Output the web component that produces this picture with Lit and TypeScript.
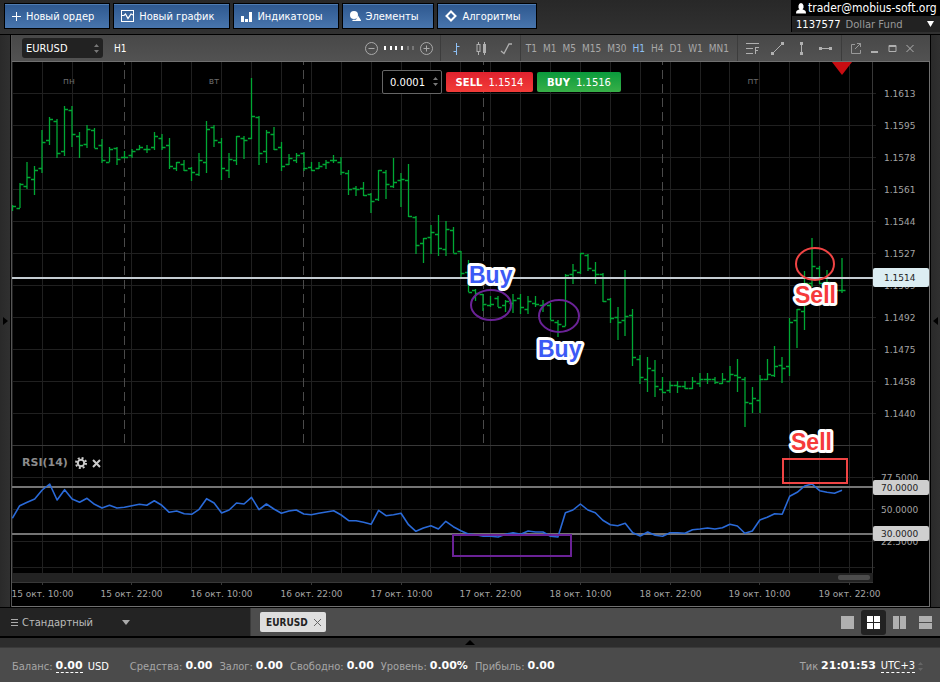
import { LitElement, html, svg, css } from "lit";
import { customElement, state } from "lit/decorators.js";
import { classMap } from "lit/directives/class-map.js";

type Bar = [high: number, low: number, open: number, close: number];

// Depth below the chart top, three ticks to a pixel: high, low, open, close.
const firstHalf: Bar[] = [
  [435, 452, 439, 439], [370, 445, 445, 372], [306, 388, 377, 352], [318, 406, 358, 330],
  [210, 338, 324, 245], [171, 254, 240, 178], [178, 293, 184, 280], [138, 289, 274, 146],
  [138, 260, 150, 223], [217, 293, 229, 256], [194, 265, 251, 206], [205, 265, 211, 263],
  [238, 310, 256, 301], [262, 307, 307, 267], [262, 316, 263, 296], [273, 291, 290, 290],
  [268, 293, 285, 273], [255, 271, 267, 262], [255, 278, 267, 268], [216, 271, 262, 229],
  [222, 271, 235, 262], [234, 328, 256, 319], [307, 332, 324, 307], [300, 332, 313, 330],
  [322, 362, 324, 335], [279, 349, 341, 301], [184, 338, 307, 206], [195, 260, 200, 240],
  [234, 361, 245, 324], [279, 355, 330, 296], [228, 316, 301, 229], [229, 298, 235, 240],
  [54, 238, 235, 167], [167, 316, 172, 280], [211, 310, 274, 217], [200, 271, 223, 268],
  [245, 332, 262, 319], [283, 316, 313, 295], [279, 310, 301, 284], [277, 332, 279, 325],
  [306, 332, 320, 330], [307, 328, 324, 319], [301, 327, 313, 307], [284, 310, 301, 301],
  [290, 344, 307, 335], [329, 406, 340, 388], [377, 408, 383, 388], [365, 408, 383, 406],
  [399, 460, 401, 422], [329, 422, 416, 330], [329, 416, 335, 371], [295, 383, 377, 367],
  [340, 440, 361, 358], [312, 472, 361, 467], [467, 583, 472, 556], [534, 610, 550, 535],
  [494, 583, 530, 517], [466, 588, 523, 563], [484, 588, 568, 506], [500, 580, 511, 580],
];

// Same units, measured from a level 480 ticks lower.
const secondHalf: Bar[] = [
  [94, 172, 94, 160], [121, 217, 155, 217], [206, 242, 211, 218], [223, 274, 223, 251],
  [227, 260, 256, 251], [227, 262, 234, 262], [239, 276, 256, 243], [222, 280, 248, 239],
  [222, 281, 235, 262], [228, 282, 268, 243], [228, 260, 250, 251], [239, 276, 256, 251],
  [250, 301, 256, 301], [301, 350, 307, 313], [161, 319, 319, 166], [132, 192, 161, 150],
  [98, 163, 156, 100], [103, 152, 106, 145], [126, 192, 151, 163], [160, 247, 161, 244],
  [233, 310, 238, 295], [262, 360, 290, 307], [149, 349, 301, 289], [267, 439, 284, 410],
  [404, 493, 416, 472], [410, 515, 478, 445], [421, 532, 451, 499], [472, 520, 506, 517],
  [484, 520, 511, 495], [484, 520, 495, 498], [484, 507, 499, 505], [472, 508, 505, 484],
  [460, 502, 489, 478], [460, 492, 478, 476], [472, 492, 478, 486], [460, 492, 490, 478],
  [438, 484, 484, 461], [416, 515, 466, 472], [472, 622, 478, 545], [500, 578, 550, 535],
  [466, 578, 540, 478], [416, 481, 478, 461], [377, 470, 466, 439], [410, 488, 434, 445],
  [294, 467, 439, 307], [267, 384, 301, 268], [154, 330, 273, 190], [54, 200, 190, 139],
  [139, 192, 145, 190], [149, 190, 185, 185], [185, 222, 190, 210], [115, 220, 210, 210],
];

const bars: Bar[] = [
  ...firstHalf,
  ...secondHalf.map((b) => b.map((v) => v + 480) as Bar),
];

// RSI depth below the start of its pane, three ticks to a pixel.
const rsi = [
  265, 227, 217, 207, 180, 162, 210, 179, 207, 217, 205, 223, 234, 226, 234, 232, 227, 223, 226,
  212, 226, 247, 243, 251, 253, 238, 206, 219, 249, 240, 219, 222, 202, 239, 222, 237, 250, 243,
  240, 252, 254, 250, 246, 242, 255, 272, 272, 277, 283, 241, 257, 254, 250, 284, 304, 294, 287,
  297, 274, 290, 302, 312, 314, 319, 319, 321, 313, 308, 313, 303, 306, 306, 319, 321, 248, 240,
  222, 240, 248, 271, 284, 287, 280, 308, 318, 306, 316, 319, 308, 308, 310, 299, 297, 294, 297,
  293, 283, 288, 310, 303, 270, 262, 251, 253, 199, 187, 168, 162, 182, 187, 190, 181,
];

const STEP = 7.475;
const WIDE = 4000;
const priceY = (v: number) => v / 3 - 2;
const rsiY = (v: number) => v / 3 + 368;
// The price scale is at x = 0; history runs to the left of it.
const barX = (i: number) => -31 - STEP * (bars.length - 1 - i);

const prices = ["1.1613", "1.1595", "1.1578", "1.1561", "1.1544", "1.1527", "1.1509", "1.1492", "1.1475", "1.1458", "1.1440"];
const dates = ["15 окт. 10:00", "15 окт. 22:00", "16 окт. 10:00", "16 окт. 22:00", "17 окт. 10:00", "17 окт. 22:00", "18 окт. 10:00", "18 окт. 22:00", "19 окт. 10:00", "19 окт. 22:00"];
const frames = ["T1", "M1", "M5", "M15", "M30", "H1", "H4", "D1", "W1", "MN1"];

const icons = {
  plus: svg`<path d="M4.500 0V9M0 4.500H9" stroke="#fff" fill="none"/>`,
  graph: svg`<rect x=".5" y=".5" width="12" height="11" fill="none" stroke="#fff"/><path d="M1 5.500H3L4.500 4L7 8.500L10 4L12 5" fill="none" stroke="#fff" stroke-width="1.200"/>`,
  columns: svg`<path d="M0 5h3v6H0zM4 8h3v3H4zM8 1h3v10H8z" fill="#fff"/>`,
  shapes: svg`<circle cx="4" cy="4" r="4" fill="#fff"/><path d="M8 4.500L11.500 10H2L3 8.800H6Z" fill="#fff"/>`,
  diamond: svg`<path d="M6 1.500L10.500 6L6 10.500L1.500 6Z" fill="none" stroke="#fff" stroke-width="2"/>`,
};

const actions = [
  { label: "Новый ордер", icon: icons.plus, w: 9, h: 9 },
  { label: "Новый график", icon: icons.graph, w: 13, h: 12 },
  { label: "Индикаторы", icon: icons.columns, w: 11, h: 11 },
  { label: "Элементы", icon: icons.shapes, w: 11, h: 10 },
  { label: "Алгоритмы", icon: icons.diamond, w: 12, h: 12 },
];

const updown = svg`<path d="M0 3L2.500 0L5 3ZM0 6L2.500 9L5 6Z" fill="#777"/>`;

const fonts = css`
  :host {
    font-family: "DejaVu Sans Condensed", "Noto Sans", sans-serif;
    font-size: 11px;
  }
  * {
    box-sizing: border-box;
  }
  button,
  select,
  input {
    margin: 0;
    padding: 0;
    border: 0;
    background: none;
    color: inherit;
    font: inherit;
    appearance: none;
    cursor: pointer;
  }
  svg {
    display: block;
    flex: none;
  }
`;

@customElement("top-bar")
class TopBar extends LitElement {
  static styles = [
    fonts,
    css`
      :host {
        display: flex;
        justify-content: space-between;
        align-items: flex-start;
        height: 35px;
        background: linear-gradient(#282828, #313131);
        border-bottom: 1px solid #000;
      }
      .actions {
        display: flex;
        gap: 3px;
        padding: 3px 0 0 4px;
      }
      .action {
        display: flex;
        align-items: center;
        gap: 5px;
        height: 26px;
        padding: 0 15px 0 7px;
        border: 1px solid #000;
        background: linear-gradient(#2e588f, #4875ad);
        box-shadow: inset 0 1px #4f7cb2;
        color: #fff;
        white-space: nowrap;
      }
      .account {
        width: 149px;
        border-left: 1px solid #000;
        background: #222;
      }
      .mail,
      .number {
        display: flex;
        align-items: center;
        gap: 2px;
        height: 16px;
        padding: 0 6px 0 4px;
        white-space: nowrap;
      }
      .mail {
        background: #000;
        color: #fff;
        font-size: 12px;
      }
      .number {
        gap: 5px;
        width: 100%;
        color: #fff;
        font-family: "DejaVu Sans", sans-serif;
        font-size: 10px;
      }
      .fund {
        flex: 1;
        text-align: left;
        color: #999;
      }
    `,
  ];

  render() {
    return html`
      <nav class="actions">
        ${actions.map(
          (a) => html`<button class="action">
            <svg width=${a.w} height=${a.h} aria-hidden="true">${a.icon}</svg>${a.label}
          </button>`,
        )}
      </nav>
      <div class="account">
        <div class="mail">
          <svg width="10" height="11" aria-hidden="true">
            <path d="M5 0a3 3.500 0 0 1 1.500 6.200L9 7.500Q10 8 10 10.500H0Q0 8 1 7.500L3.500 6.200A3 3.500 0 0 1 5 0z" fill="#fff" />
          </svg>
          trader@mobius-soft.org
        </div>
        <button class="number">
          <span>1137577</span><span class="fund">Dollar Fund</span>
          <svg width="7" height="6" aria-hidden="true"><path d="M0 0H7L3.500 6Z" fill="#fff" /></svg>
        </button>
      </div>
    `;
  }
}

@customElement("chart-toolbar")
class ChartToolbar extends LitElement {
  @state() private frame = "H1";

  static styles = [
    fonts,
    css`
      :host {
        display: flex;
        align-items: center;
        height: 26px;
        padding-left: 10px;
        background: linear-gradient(#484848, #525252);
        color: #a8a8a8;
      }
      .symbol {
        position: relative;
        width: 81px;
        height: 20px;
      }
      .pick {
        width: 100%;
        height: 20px;
        padding: 0 4px;
        border-radius: 3px;
        background: #222;
        color: #fff;
      }
      .updown {
        position: absolute;
        right: 4px;
        top: 6px;
        pointer-events: none;
      }
      .period {
        flex: 1;
        padding-left: 11px;
        color: #fff;
        font-size: 10px;
      }
      .group {
        display: flex;
        align-items: center;
        height: 26px;
        border-right: 1px solid #3c3c3c;
      }
      .zoom {
        gap: 5px;
        padding-right: 7px;
      }
      .kinds {
        gap: 12px;
        padding: 0 7px 0 9px;
      }
      .frames {
        gap: 6px;
        padding: 0 8px 0 5px;
        font-size: 10px;
      }
      .frame.on {
        color: #8ec0f5;
      }
      .tools {
        gap: 11px;
        padding: 0 9px 0 8px;
      }
      .window {
        gap: 9px;
        padding: 0 16px 0 9px;
        border: 0;
      }
    `,
  ];

  render() {
    return html`
      <div class="symbol">
        <select class="pick" aria-label="Инструмент">
          <option>EURUSD</option>
        </select>
        <svg class="updown" width="5" height="9" aria-hidden="true">${updown}</svg>
      </div>
      <span class="period">H1</span>
      <div class="group zoom">
        <button aria-label="Уменьшить">
          <svg width="13" height="13"><circle cx="6.500" cy="6.500" r="6" fill="none" stroke="#aaa" /><path d="M3.500 6.500H9.500" stroke="#aaa" /></svg>
        </button>
        <svg width="32" height="4" aria-hidden="true">
          <path d="M1 0h2v4h-2zM7 0h2v4h-2zM12 0h2v4h-2zM18 0h2v4h-2z" fill="#fff" />
          <path d="M24 0h2v4h-2zM29 0h2v4h-2z" fill="#777" />
        </svg>
        <button aria-label="Увеличить">
          <svg width="13" height="13"><circle cx="6.500" cy="6.500" r="6" fill="none" stroke="#aaa" /><path d="M3.500 6.500H9.500M6.500 3.500V9.500" stroke="#aaa" /></svg>
        </button>
      </div>
      <div class="group kinds">
        <button aria-label="Бары">
          <svg width="13" height="13"><path d="M6.500 1V13M6.500 4.500H9.500M3.500 9.500H6.500" stroke="#8ec0f5" /></svg>
        </button>
        <button aria-label="Свечи">
          <svg width="13" height="13"><path d="M3.500 0V2M3.500 10V13M9.500 0V13" stroke="#b0b0b0" /><rect x="2" y="2.500" width="3" height="7" fill="none" stroke="#b0b0b0" /><path d="M8 2H11V11H8Z" fill="#b0b0b0" /></svg>
        </button>
        <button aria-label="Линия">
          <svg width="13" height="13"><path d="M1 9L4 11.500L9 2H12" fill="none" stroke="#b0b0b0" stroke-width="1.300" /></svg>
        </button>
      </div>
      <div class="group frames">
        ${frames.map(
          (f) => html`<button class=${classMap({ frame: true, on: f === this.frame })} @click=${() => (this.frame = f)}>${f}</button>`,
        )}
      </div>
      <div class="group tools">
        <button aria-label="Фибоначчи">
          <svg width="14" height="13"><path d="M0 1.500H13M0 6.500H7M0 11.500H7M9.500 12V6M9 5.500H13M9 8.500H12" stroke="#b0b0b0" fill="none" /></svg>
        </button>
        <button aria-label="Отрезок">
          <svg width="13" height="13"><path d="M2 11L11 2" stroke="#b0b0b0" /><path d="M0 10h3v3H0zM10 0h3v3H10z" fill="#b0b0b0" /></svg>
        </button>
        <button aria-label="Вертикаль">
          <svg width="13" height="13"><path d="M6.500 1V12" stroke="#b0b0b0" /><path d="M5 0h3v3H5zM5 10h3v3H5z" fill="#b0b0b0" /></svg>
        </button>
        <button aria-label="Горизонталь">
          <svg width="13" height="13"><path d="M1 6.500H12" stroke="#b0b0b0" /><path d="M0 5h3v3H0zM10 5h3v3H10z" fill="#b0b0b0" /></svg>
        </button>
      </div>
      <div class="group window">
        <button aria-label="Открепить">
          <svg width="10" height="11"><path d="M4 1.500H.5V10.500H9.500V7M6 .5H9.500V4M9.500 .5L4 6" fill="none" stroke="#999" /></svg>
        </button>
        <button aria-label="Свернуть">
          <svg width="9" height="11"><path d="M1 8h7v2H1z" fill="#b0b0b0" /></svg>
        </button>
        <button aria-label="Развернуть">
          <svg width="9" height="11"><path d="M1 2.500h7v6H1zM1 3.500H8" fill="none" stroke="#b0b0b0" /></svg>
        </button>
        <button aria-label="Закрыть">
          <svg width="8" height="11"><path d="M.5 2L7.500 9M7.500 2L.5 9" stroke="#b0b0b0" /></svg>
        </button>
      </div>
    `;
  }
}

@customElement("price-chart")
class PriceChart extends LitElement {
  static styles = [
    fonts,
    css`
      :host {
        display: block;
        position: relative;
        height: 546px;
        overflow: hidden;
        border: solid #707070;
        border-width: 1px 1px 1px 0;
        background: #000;
      }
      .plot {
        width: 100%;
        height: 544px;
      }
      .anchor {
        overflow: visible;
      }
      .grid {
        stroke: #202020;
      }
      .frame {
        stroke: #383838;
      }
      .day {
        stroke: #4a4a4a;
        stroke-dasharray: 9 5;
        stroke-dashoffset: 6;
      }
      .bars {
        fill: none;
        stroke: #00a834;
        stroke-width: 1.3;
      }
      .rsi {
        fill: none;
        stroke: #2a6ad8;
        stroke-width: 1.6;
        stroke-linejoin: round;
      }
      .level {
        stroke: #747474;
        stroke-width: 2;
      }
      .last {
        stroke: #c4ccd2;
        stroke-width: 2;
      }
      .axis,
      .weekday {
        fill: #a4a4a4;
        font-family: "DejaVu Sans", sans-serif;
        font-size: 9px;
      }
      .weekday {
        fill: #6a6a6a;
      }
      .centered {
        text-anchor: middle;
      }
      .tagtext {
        fill: #222;
      }
      .buy {
        fill: #3c5af5;
      }
      .sell {
        fill: #f53a3a;
      }
      .note {
        font: bold 23px "Liberation Sans", sans-serif;
        stroke: #fff;
        stroke-width: 6;
        stroke-linejoin: round;
        paint-order: stroke;
      }
      .purple,
      .red {
        fill: none;
        stroke: #6a2296;
        stroke-width: 2;
      }
      .red {
        stroke: #f04444;
      }
      .trade {
        position: absolute;
        top: 8px;
        left: 370px;
        display: flex;
        align-items: center;
        gap: 4px;
        color: #fff;
        font-family: "DejaVu Sans", sans-serif;
        font-size: 10px;
      }
      .amount {
        position: relative;
        height: 24px;
      }
      .size {
        width: 60px;
        height: 24px;
        padding-left: 7px;
        border: 1px solid #666;
        border-radius: 2px;
        background: #000;
      }
      .updown {
        position: absolute;
        right: 4px;
        top: 7px;
      }
      .deal {
        display: flex;
        justify-content: center;
        align-items: center;
        gap: 6px;
        height: 20px;
        border-radius: 2px;
      }
      .short {
        width: 87px;
        background: linear-gradient(#e0222e, #f23c38);
      }
      .long {
        width: 84px;
        background: linear-gradient(#0a9a3c, #38b048);
      }
      .indicator {
        position: absolute;
        top: 393px;
        left: 10px;
        display: flex;
        align-items: center;
        gap: 5px;
        color: #8c8c8c;
        font-family: "DejaVu Sans", sans-serif;
        font-size: 11px;
        font-weight: bold;
        line-height: 16px;
      }
      .name {
        margin-right: 2px;
      }
    `,
  ];

  private marks() {
    const d = bars
      .map(([high, low, open, close], i) => {
        const x = Math.round(barX(i) * 2) / 2;
        const [h, l, o, c] = [high, low, open, close].map((v) => Math.round(priceY(v)));
        return `M${x} ${h}V${l}M${x - 3.5} ${o + 0.5}H${x}M${x} ${c + 0.5}H${x + 3.5}`;
      })
      .join("");
    return svg`<path class="bars" d=${d} />`;
  }

  private tag(y: number, h: number, fill: string, text: string) {
    return svg`<rect x="0" y=${y} width="56" height=${h} rx="2" fill=${fill} />
      <text class="axis tagtext" x=${h > 16 ? 11 : 8} y=${Math.round(y + h / 2 + 3)}>${text}</text>`;
  }

  render() {
    const columns = Array.from({ length: 120 }, (_, i) => Math.round(-23 - 29.9 * i) - 0.5);
    const line = rsi.map((v, i) => `${barX(i).toFixed(1)},${rsiY(v).toFixed(1)}`).join(" ");
    return html`
      <svg class="plot" role="img" aria-label="EURUSD H1">
        <svg class="anchor" x="100%">
          <g transform="translate(-56 0)">
            ${columns.map((x) => svg`<path class="grid" d="M${x} 0V511" />`)}
            ${prices.map((_, i) => svg`<path class="grid" d="M${-WIDE} ${31.5 + 32 * i}H3" />`)}
            ${[415, 447, 479, 505].map((y) => svg`<path class="grid" d="M${-WIDE} ${y + 0.5}H2" />`)}
            <path class="frame" d="M${-WIDE} 383.500H0M-.5 0V521" />
            ${[0, 1, 2, 3].map((i) => svg`<path class="day" d="M${Math.round(-210 - 179.4 * i) - 0.5} 0V383" />`)}
            <text class="weekday centered" x="-804" y="22">пн</text>
            <text class="weekday centered" x="-659" y="22">вт</text>
            <text class="weekday centered" x="-120" y="22">пт</text>
            ${this.marks()}
            <path class="last" d="M${-WIDE} 216H0" />
            <path class="level" d="M${-WIDE} 425H0M${-WIDE} 472H0" />
            <polyline class="rsi" points=${line} />
            <path d="M-41 0H-21L-31 13Z" fill="#c80d12" />
            <rect x=${-WIDE} y="511" width=${WIDE} height="9" fill="#232323" />
            <path class="frame" d="M${-WIDE} 520.500H0" />
            <rect x="-35" y="513" width="32" height="5" rx="2" fill="#4c4c4c" />
            ${dates.map((t, i) => {
              const x = Math.round(-23 - 89.7 * (dates.length - 1 - i)) - 0.5;
              return svg`<path class="frame" d="M${x} 520V523" />
                <text class="axis centered" x=${x} y="535">${t}</text>`;
            })}
            ${prices.map((t, i) => svg`<text class="axis" x="11" y=${35 + 32 * i}>${t}</text>`)}
            <text class="axis" x="8" y="419">77.5000</text>
            <text class="axis" x="8" y="451">50.0000</text>
            <text class="axis" x="8" y="483">22.5000</text>
            ${this.tag(206, 19, "#dcedf2", "1.1514")}
            ${this.tag(418, 15, "#cfcfcf", "70.0000")}
            ${this.tag(464, 15, "#cfcfcf", "30.0000")}
            <ellipse class="purple" cx="-382" cy="243" rx="20" ry="15" />
            <ellipse class="purple" cx="-314" cy="254" rx="20" ry="16" />
            <ellipse class="red" cx="-58" cy="202" rx="19" ry="16" />
            <rect class="purple" x="-420" y="473" width="118" height="21" />
            <rect class="red" x="-90" y="397" width="64" height="24" />
            <text class="note buy" x="-404" y="221">Buy</text>
            <text class="note buy" x="-335" y="295">Buy</text>
            <text class="note sell" x="-78" y="241">Sell</text>
            <text class="note sell" x="-82" y="388">Sell</text>
          </g>
        </svg>
      </svg>
      <div class="trade">
        <div class="amount">
          <input class="size" value="0.0001" aria-label="Объём" />
          <svg class="updown" width="5" height="9" aria-hidden="true">${updown}</svg>
        </div>
        <button class="deal short"><b>SELL</b><span>1.1514</span></button>
        <button class="deal long"><b>BUY</b><span>1.1516</span></button>
      </div>
      <div class="indicator">
        <span class="name">RSI(14)</span>
        <button aria-label="Настройки">
          <svg width="12" height="12"><circle cx="6" cy="6" r="5" fill="none" stroke="#ccc" stroke-width="2" stroke-dasharray="2 1.930" /><circle cx="6" cy="6" r="3.200" fill="none" stroke="#ccc" stroke-width="2" /></svg>
        </button>
        <button aria-label="Удалить">
          <svg width="9" height="9"><path d="M1 1L8 8M8 1L1 8" stroke="#ccc" stroke-width="2" /></svg>
        </button>
      </div>
    `;
  }
}

@customElement("workspace-tabs")
class WorkspaceTabs extends LitElement {
  @state() private layout = 1;

  static styles = [
    fonts,
    css`
      :host {
        display: flex;
        height: 31px;
        border: solid #000;
        border-width: 1px 0 2px;
        background: #4d4d4d;
      }
      .profile {
        display: flex;
        align-items: center;
        gap: 4px;
        width: 251px;
        padding: 0 11px;
        border-right: 1px solid #3a3a3a;
        background: #232323;
        color: #bbb;
      }
      .caption {
        width: 96px;
        text-align: left;
      }
      .tabs {
        display: flex;
        flex: 1;
        align-items: center;
        padding-left: 9px;
      }
      .tab {
        display: flex;
        align-items: center;
        gap: 5px;
        height: 20px;
        padding: 0 4px 0 6px;
        border-radius: 2px;
        background: #dedede;
        color: #222;
        font-size: 10px;
        font-weight: bold;
      }
      .layouts {
        display: flex;
        align-items: center;
        gap: 1px;
        padding-right: 2px;
      }
      .layout {
        display: grid;
        place-items: center;
        width: 25px;
        height: 25px;
        border-radius: 3px;
        fill: #b0b0b0;
      }
      .layout.on {
        background: #222;
        fill: #fff;
      }
    `,
  ];

  render() {
    const shapes = ["M0 0h13v13H0z", "M0 0h6v6H0zM7 0h6v6H7zM0 7h6v6H0zM7 7h6v6H7z", "M0 0h6v13H0zM7 0h6v13H7z", "M0 0h13v6H0zM0 7h13v6H0z"];
    const names = ["Одно окно", "Сетка", "Колонки", "Строки"];
    return html`
      <button class="profile">
        <svg width="7" height="9" aria-hidden="true"><path d="M0 1.500H7M0 4.500H7M0 7.500H7" stroke="#aaa" /></svg>
        <span class="caption">Стандартный</span>
        <svg width="8" height="5" aria-hidden="true"><path d="M0 0H8L4 5Z" fill="#aaa" /></svg>
      </button>
      <div class="tabs">
        <div class="tab">
          EURUSD
          <button aria-label="Закрыть EURUSD">
            <svg width="9" height="9"><path d="M1 1L8 8M8 1L1 8" stroke="#666" /></svg>
          </button>
        </div>
      </div>
      <div class="layouts">
        ${shapes.map(
          (d, i) => html`<button class=${classMap({ layout: true, on: i === this.layout })} aria-label=${names[i]} @click=${() => (this.layout = i)}>
            <svg width="13" height="13"><path d=${d} /></svg>
          </button>`,
        )}
      </div>
    `;
  }
}

@customElement("status-bar")
class StatusBar extends LitElement {
  static styles = [
    fonts,
    css`
      :host {
        display: block;
        background: #4b4b4b;
      }
      .fold {
        display: flex;
        justify-content: center;
        align-items: center;
        width: 100%;
        height: 10px;
        border-bottom: 1px solid #3a3a3a;
        background: #2d2d2d;
      }
      .row {
        display: flex;
        align-items: center;
        gap: 7px;
        height: 34px;
        padding: 2px 17px 0 12px;
        color: #a6a6a6;
        white-space: nowrap;
      }
      .item {
        display: flex;
        align-items: center;
        gap: 3px;
        line-height: 13px;
      }
      .value {
        border-bottom: 1px solid transparent;
        color: #fff;
        font-family: "DejaVu Sans", sans-serif;
      }
      .dashed {
        border-bottom: 1px dashed #fff;
      }
      .plain {
        color: #fff;
      }
      .money {
        margin: 0 14px 0 2px;
      }
      .clock {
        margin-left: auto;
      }
      .zone {
        margin-left: 2px;
      }
    `,
  ];

  render() {
    const items = [["Средства:", "0.00"], ["Залог:", "0.00"], ["Свободно:", "0.00"], ["Уровень:", "0.00%"], ["Прибыль:", "0.00"]];
    return html`
      <button class="fold" aria-label="Развернуть панель">
        <svg width="10" height="5" aria-hidden="true"><path d="M5 0L10 5H0Z" fill="#000" /></svg>
      </button>
      <div class="row">
        <span class="item">Баланс: <b class="value dashed">0.00</b><span class="plain money">USD</span></span>
        ${items.map(([label, value]) => html`<span class="item">${label} <b class="value">${value}</b></span>`)}
        <span class="item clock">
          Тик <b class="value">21:01:53</b><button class="plain zone dashed">UTC+3</button>
          <svg width="5" height="9" opacity=".6" aria-hidden="true">${updown}</svg>
        </span>
      </div>
    `;
  }
}

@customElement("app-root")
class AppRoot extends LitElement {
  static styles = [
    fonts,
    css`
      :host {
        display: flex;
        flex-direction: column;
        min-height: 100vh;
        background: #2b2b2b;
      }
      .desk {
        display: flex;
        flex: 1;
        background: #000;
      }
      .side {
        display: grid;
        place-items: center;
        width: 10px;
        background: linear-gradient(90deg, #2a2a2a, #303030);
      }
      .narrow {
        width: 9px;
      }
      .window {
        flex: 1;
        min-width: 0;
        margin: 0 1px;
        border-left: 1px solid #555;
        background: #000;
      }
    `,
  ];

  render() {
    return html`
      <top-bar></top-bar>
      <main class="desk">
        <button class="side" aria-label="Левая панель"><svg width="5" height="8"><path d="M0 0L5 4L0 8Z" fill="#000" /></svg></button>
        <section class="window">
          <chart-toolbar></chart-toolbar>
          <price-chart></price-chart>
        </section>
        <button class="side narrow" aria-label="Правая панель"><svg width="5" height="8"><path d="M5 0L0 4L5 8Z" fill="#000" /></svg></button>
      </main>
      <workspace-tabs></workspace-tabs>
      <status-bar></status-bar>
    `;
  }
}
